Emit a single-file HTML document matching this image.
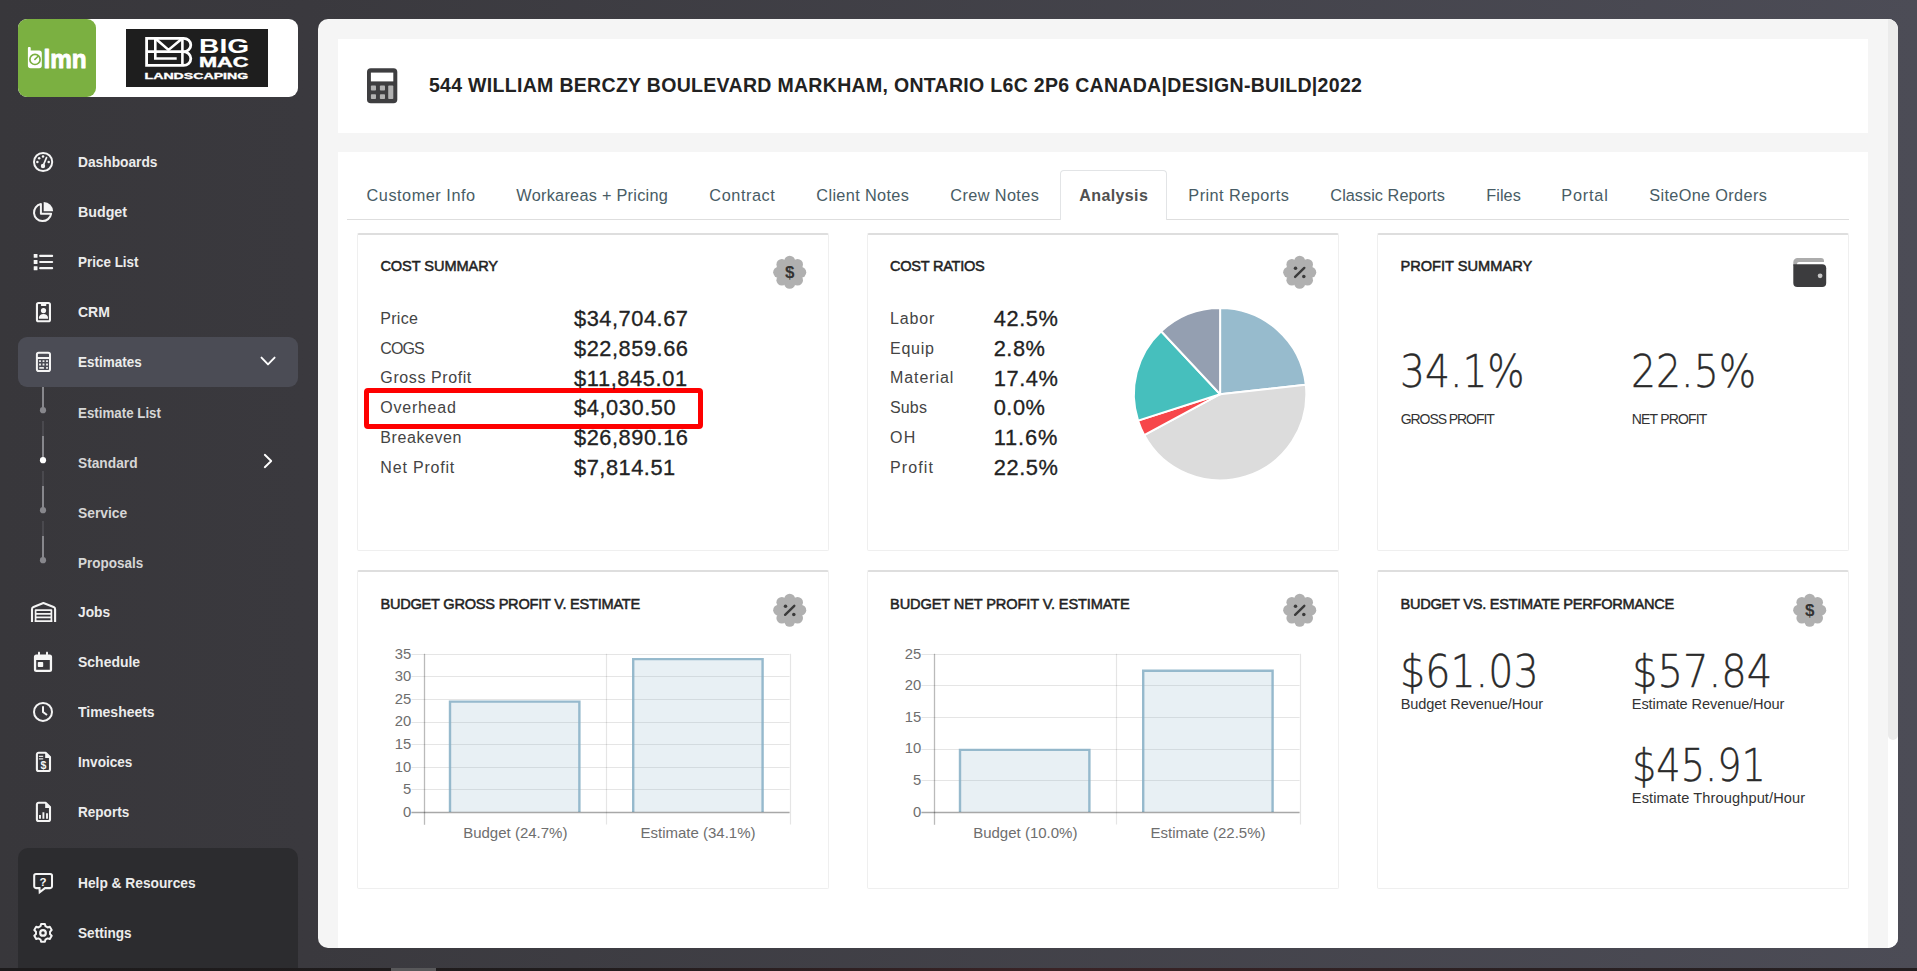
<!DOCTYPE html>
<html lang="en">
<head>
<meta charset="utf-8">
<title>Estimate Analysis</title>
<style>
*{box-sizing:border-box;margin:0;padding:0}
html,body{width:1917px;height:971px;overflow:hidden}
body{position:relative;font-family:"Liberation Sans",sans-serif;background:linear-gradient(90deg,#38373b 0%,#3a393e 16%,#4c4c56 100%)}
.abs{position:absolute}
.t{position:absolute;white-space:nowrap;transform-origin:0 50%;display:block}
#strip{position:absolute;left:0;top:968px;width:1917px;height:3px;background:linear-gradient(90deg,#1d1b1c,#201c1d 30%,#3a2326 55%,#2a2022 80%,#241f21)}
#strip i{position:absolute;left:391px;top:0;width:45px;height:3px;background:#58585a}
/* sidebar */
#logo{position:absolute;left:18px;top:19px;width:280px;height:78px;background:#fff;border-radius:9px}
#lmn{position:absolute;left:0;top:0;width:78px;height:78px;background:#7bb041;border-radius:9px}
#bm{position:absolute;left:108px;top:10px;width:142px;height:58px;background:#1e1e1e}
#active{position:absolute;left:18px;top:337px;width:280px;height:50px;background:#4b4c55;border-radius:9px}
#helpbox{position:absolute;left:18px;top:848px;width:280px;height:130px;background:#2c2c2f;border-radius:10px}
.ico{position:absolute;left:31px;width:24px;height:24px;overflow:visible}
/* main */
#panel{position:absolute;left:318px;top:19px;width:1580px;height:929px;background:#f5f5f5;border-radius:10px;overflow:hidden}
#titlecard{position:absolute;left:20px;top:20px;width:1530px;height:94px;background:#fff}
#content{position:absolute;left:20px;top:133px;width:1530px;height:800px;background:#fff}
#sbtrack{position:absolute;left:1570px;top:0;width:10px;height:929px;background:#fff}
#sbthumb{position:absolute;left:1570px;top:0;width:10px;height:721px;background:#ebebeb;border-radius:0 0 5px 5px}
.card{position:absolute;width:472px;height:318px;background:#fff;border:1px solid #efefef;border-top:2px solid #dedede;border-radius:2px}
#tabline{position:absolute;left:347px;top:219px;width:1502px;height:1px;background:#dedede}
#acttab{position:absolute;left:1060px;top:170px;width:107px;height:50px;background:#fff;border:1px solid #e2e4e6;border-bottom:none;border-radius:4px 4px 0 0}
#redbox{position:absolute;left:364.3px;top:387.6px;width:339px;height:41px;border:5px solid #fe0000;border-radius:4px}
</style>
</head>

<body>
<div id="logo">
  <div id="lmn">
    <svg class="abs" style="left:0;top:0" width="78" height="78" viewBox="0 0 78 78">
      <path d="M9.9 28.9 a.9 .9 0 0 1 .9 -.9 h1 a.9 .9 0 0 1 .9 .9 v2.5 h8.4 a2.7 2.7 0 0 1 2.7 2.7 v12.5 a2.7 2.7 0 0 1 -2.7 2.7 h-8.5 a2.7 2.7 0 0 1 -2.7 -2.7 z" fill="#fff"/>
      <circle cx="17" cy="40.4" r="5.1" fill="none" stroke="#7bb041" stroke-width="1.7"/>
      <path d="M16.4 40.8 L20.4 37" fill="none" stroke="#7bb041" stroke-width="1.6"/>
      <text x="25.4" y="49.2" font-family="Liberation Sans, sans-serif" font-weight="700" font-size="25" fill="#fff" stroke="#fff" stroke-width=".9" stroke-linejoin="round" textLength="43.2" lengthAdjust="spacingAndGlyphs">lmn</text>
    </svg>
  </div>
  <div id="bm">
    <svg class="abs" style="left:0;top:0" width="142" height="58" viewBox="0 0 142 58">
      <g fill="none" stroke="#fff" stroke-width="2.8" stroke-linejoin="miter">
        <path d="M20.6 9.3 H57.6 a7.2 6.7 0 0 1 0 13.4 a7.2 6.85 0 0 1 0 13.7 H20.6 Z"/>
        <path d="M20.6 22.7 H58"/>
        <path d="M29.3 9.3 V29.5 H50.7" stroke-width="2.6"/>
        <path d="M30 10 L42.5 20.9 L55.6 10" stroke-width="2.6"/>
        <path d="M56.4 9.3 V36.4" stroke-width="2.6"/>
      </g>
      <text x="73.1" y="23.7" font-family="Liberation Sans, sans-serif" font-weight="700" font-size="20.2" fill="#fff" textLength="50" lengthAdjust="spacingAndGlyphs">BIG</text>
      <text x="72.9" y="38" font-family="Liberation Sans, sans-serif" font-weight="700" font-size="14.2" fill="#fff" stroke="#fff" stroke-width=".4" textLength="49.6" lengthAdjust="spacingAndGlyphs">MAC</text>
      <text x="18.6" y="49.5" font-family="Liberation Sans, sans-serif" font-weight="700" font-size="8.5" fill="#fff" stroke="#fff" stroke-width=".3" textLength="103.6" lengthAdjust="spacingAndGlyphs">LANDSCAPING</text>
    </svg>
  </div>
</div>
<div id="active"></div>
<div id="helpbox"></div>
<svg class="abs" style="left:0;top:0;pointer-events:none" width="318" height="971" viewBox="0 0 318 971" fill="none" stroke="#f4f4f4" stroke-width="2" stroke-linecap="round" stroke-linejoin="round">
<circle cx="43.1" cy="162" r="9.1"/>
<g fill="#f6f6f6" stroke="none"><circle cx="37.4" cy="162.1" r="1.25"/><circle cx="39.2" cy="158.2" r="1.25"/><circle cx="43" cy="156.4" r="1.25"/><circle cx="48.7" cy="162" r="1.25"/><circle cx="43" cy="166" r="2.2"/></g>
<path d="M43 166 L46.5 157.6" stroke-width="1.7"/>
<path d="M40.9 204.07 A8.6 8.6 0 1 0 51.1 213.8 L40.9 213.8 Z" stroke-width="2"/>
<path d="M43.7 211.3 V201.9 A9.4 9.4 0 0 1 53.1 211.3 Z" fill="#f6f6f6" stroke="none"/>
<rect x="33.7" y="253.95" width="3.8" height="3.9" rx=".5" fill="#f6f6f6" stroke="none"/>
<path d="M40.2 255.9 H52.1" stroke-width="2.2"/>
<rect x="33.7" y="260.05" width="3.8" height="3.9" rx=".5" fill="#f6f6f6" stroke="none"/>
<path d="M40.2 262 H52.1" stroke-width="2.2"/>
<rect x="33.7" y="266.25" width="3.8" height="3.9" rx=".5" fill="#f6f6f6" stroke="none"/>
<path d="M40.2 268.2 H52.1" stroke-width="2.2"/>
<rect x="36.95" y="302.95" width="13" height="18.3" rx="1.6" stroke-width="2.1"/>
<g fill="#f6f6f6" stroke="none"><rect x="40.9" y="303.5" width="5.4" height="2.4" rx=".6"/><circle cx="43.5" cy="310.6" r="2.6"/><path d="M38.9 318.7 V317.6 C38.9 315.4 41 313.9 43.45 313.9 C45.9 313.9 48 315.4 48 317.6 V318.7 Z"/></g>
<rect x="36.9" y="352.8" width="13.1" height="18.2" rx="1.8" stroke-width="2"/>
<path d="M37 358 H50" stroke-width="2"/>
<g fill="#f6f6f6" stroke="none" opacity=".93">
<rect x="39.05" y="360.15" width="1.9" height="1.9" rx=".3"/>
<rect x="42.55" y="360.15" width="1.9" height="1.9" rx=".3"/>
<rect x="46.05" y="360.15" width="1.9" height="1.9" rx=".3"/>
<rect x="39.05" y="363.55" width="1.9" height="1.9" rx=".3"/>
<rect x="42.55" y="363.55" width="1.9" height="1.9" rx=".3"/>
<rect x="46.05" y="363.55" width="1.9" height="1.9" rx=".3"/>
<rect x="39.1" y="366.95" width="5" height="1.9" rx=".9"/><rect x="46.05" y="366.95" width="1.9" height="1.9" rx=".3"/></g>
<path d="M261.5 357.6 L268 364.4 L274.6 357.6" stroke-width="1.9" stroke="#fff"/>
<path d="M264.8 454.8 L271.2 461 L264.8 467.2" stroke-width="1.9" stroke="#fff"/>
<g stroke="#87878c" stroke-linecap="butt">
<path d="M43 387 V410" stroke-width="2"/>
<path d="M43 421 V436" stroke-width="1" stroke="#5d5d62"/>
<path d="M43 436 V460" stroke-width="2"/>
<path d="M43 471 V486" stroke-width="1" stroke="#5d5d62"/>
<path d="M43 486 V510" stroke-width="2"/>
<path d="M43 521 V536" stroke-width="1" stroke="#5d5d62"/>
<path d="M43 536 V560" stroke-width="2"/>
</g>
<g stroke="none"><circle cx="43" cy="410.2" r="3.1" fill="#87878c"/><circle cx="43" cy="460.2" r="3.1" fill="#fff"/><circle cx="43" cy="510.2" r="3.1" fill="#87878c"/><circle cx="43" cy="560.2" r="3.1" fill="#87878c"/></g>
<path d="M32 622 V609.2 Q32 607.6 33.5 606.9 L43.4 603.1 L53.6 606.9 Q55.1 607.6 55.1 609.2 V622" stroke-width="2.1" stroke-linecap="butt"/>
<g stroke-width="1.7" stroke-linecap="butt"><path d="M35.6 622 V610.2 H51.4 V622"/><path d="M35.6 613.8 H51.4 M35.6 617.4 H51.4 M34.8 621.1 H52.2"/></g>
<path d="M36.4 654.4 H49.6 A2.5 2.5 0 0 1 52.1 656.9 V669.5 A2.5 2.5 0 0 1 49.6 672 H36.4 A2.5 2.5 0 0 1 33.9 669.5 V656.9 A2.5 2.5 0 0 1 36.4 654.4 Z M36.2 660 V669.8 H49.8 V660 Z" fill="#f6f6f6" fill-rule="evenodd" stroke="none"/>
<g fill="#f6f6f6" stroke="none"><rect x="38" y="651.8" width="2" height="3.2" rx=".4"/><rect x="46" y="651.8" width="2" height="3.2" rx=".4"/><rect x="37.8" y="662" width="5.4" height="5" rx=".8"/></g>
<circle cx="43" cy="711.9" r="9"/>
<path d="M43 706.3 V712 L47 715" stroke-width="2" stroke-linecap="butt" stroke-linejoin="miter"/>
<path d="M38.6 752.8 H45.6 L50 757.0 V769.4 A1.7 1.7 0 0 1 48.3 771.0 H38.6 A1.7 1.7 0 0 1 36.9 769.4 V754.5 A1.7 1.7 0 0 1 38.6 752.8 Z" stroke-width="2.1"/><path d="M45.2 752.4 V757.9 H50.6 Z" fill="#f6f6f6" stroke="none"/>
<path d="M38.9 756.4 H43.2 M38.9 758.8 H43.2" stroke-width="1.3" stroke-linecap="butt" opacity=".9"/>
<text x="43.5" y="768.6" text-anchor="middle" font-family="Liberation Sans, sans-serif" font-weight="700" font-size="10.5" fill="#f6f6f6" stroke="none" style="opacity:.999">$</text>
<path d="M38.6 802.8 H45.6 L50 807.0 V819.4 A1.7 1.7 0 0 1 48.3 821.0 H38.6 A1.7 1.7 0 0 1 36.9 819.4 V804.5 A1.7 1.7 0 0 1 38.6 802.8 Z" stroke-width="2.1"/><path d="M45.2 802.4 V807.9 H50.6 Z" fill="#f6f6f6" stroke="none"/>
<path d="M40 818.8 V814.9 M43.4 818.8 V812.3 M47 818.8 V813.2" stroke-width="1.9" stroke-linecap="butt"/>
<path d="M36 874 H50.2 A1.8 1.8 0 0 1 52 875.8 V886.3 A1.8 1.8 0 0 1 50.2 888.1 H45 L39.7 892.3 L39.5 888.1 H36 A1.8 1.8 0 0 1 34.2 886.3 V875.8 A1.8 1.8 0 0 1 36 874 Z" stroke-width="2.05" stroke-linejoin="miter"/>
<text x="43.1" y="885.6" text-anchor="middle" font-family="Liberation Sans, sans-serif" font-weight="700" font-size="11.5" fill="#f6f6f6" stroke="none" style="opacity:.999">?</text>
<path d="M45.45 926.18 L44.90 923.95 L41.10 923.95 L40.55 926.18 L38.40 927.42 L36.20 926.78 L34.30 930.07 L35.96 931.66 L35.96 934.14 L34.30 935.73 L36.20 939.02 L38.40 938.38 L40.55 939.62 L41.10 941.85 L44.90 941.85 L45.45 939.62 L47.60 938.38 L49.80 939.02 L51.70 935.73 L50.04 934.14 L50.04 931.66 L51.70 930.07 L49.80 926.78 L47.60 927.42 Z" stroke-width="2"/>
<circle cx="43" cy="932.9" r="2.8" stroke-width="2.2"/>
</svg>

<div id="panel">
  <div id="titlecard"></div>
  <div id="content"></div>
  <div id="sbtrack"></div><div id="sbthumb"></div>
</div>
<div id="strip"><i></i></div>
<div id="tabline"></div><div id="acttab"></div>
<div class="card" style="left:357px;top:233px"></div>
<div class="card" style="left:867px;top:233px"></div>
<div class="card" style="left:1377px;top:233px"></div>
<div class="card" style="left:357px;top:570px;height:319px"></div>
<div class="card" style="left:867px;top:570px;height:319px"></div>
<div class="card" style="left:1377px;top:570px;height:319px"></div>
<div id="redbox"></div>
<svg class="abs" style="left:318px;top:19px;pointer-events:none" width="1580" height="929" viewBox="318 19 1580 929">
<g>
<rect x="367" y="68.3" width="30.3" height="35" rx="3.8" fill="#3e3e40"/>
<rect x="370.9" y="72.6" width="22.4" height="8.8" fill="#fff"/>
<g fill="#b1b1b1"><rect x="370.9" y="85.6" width="5.1" height="4.9" rx=".8"/><rect x="379.9" y="85.6" width="5.1" height="4.9" rx=".8"/>
<rect x="370.9" y="94.2" width="5.1" height="4.9" rx=".8"/><rect x="379.9" y="94.2" width="5.1" height="4.9" rx=".8"/>
<rect x="388.2" y="85.6" width="5.1" height="13.5" rx=".8"/></g></g>
<g><g fill="#b0b0b0"><circle cx="789.7" cy="272.3" r="12.2"/><circle cx="789.70" cy="261.20" r="5.45"/><circle cx="797.55" cy="264.45" r="5.45"/><circle cx="800.80" cy="272.30" r="5.45"/><circle cx="797.55" cy="280.15" r="5.45"/><circle cx="789.70" cy="283.40" r="5.45"/><circle cx="781.85" cy="280.15" r="5.45"/><circle cx="778.60" cy="272.30" r="5.45"/><circle cx="781.85" cy="264.45" r="5.45"/></g><text x="789.7" y="278.40000000000003" text-anchor="middle" font-family="Liberation Sans, sans-serif" font-weight="700" font-size="17" fill="#333" style="opacity:.999">$</text></g>
<g><g fill="#b0b0b0"><circle cx="1299.7" cy="272.3" r="12.2"/><circle cx="1299.70" cy="261.20" r="5.45"/><circle cx="1307.55" cy="264.45" r="5.45"/><circle cx="1310.80" cy="272.30" r="5.45"/><circle cx="1307.55" cy="280.15" r="5.45"/><circle cx="1299.70" cy="283.40" r="5.45"/><circle cx="1291.85" cy="280.15" r="5.45"/><circle cx="1288.60" cy="272.30" r="5.45"/><circle cx="1291.85" cy="264.45" r="5.45"/></g><g fill="#3a3a3a" stroke="none"><circle cx="1295.5" cy="268.3" r="1.75"/><circle cx="1303.8" cy="276.5" r="1.75"/></g><path d="M1295.1000000000001 276.90000000000003 L1304.3 267.90000000000003" stroke="#3a3a3a" stroke-width="2.4" stroke-linecap="round"/></g>
<g><g fill="#b0b0b0"><circle cx="789.7" cy="610.2" r="12.2"/><circle cx="789.70" cy="599.10" r="5.45"/><circle cx="797.55" cy="602.35" r="5.45"/><circle cx="800.80" cy="610.20" r="5.45"/><circle cx="797.55" cy="618.05" r="5.45"/><circle cx="789.70" cy="621.30" r="5.45"/><circle cx="781.85" cy="618.05" r="5.45"/><circle cx="778.60" cy="610.20" r="5.45"/><circle cx="781.85" cy="602.35" r="5.45"/></g><g fill="#3a3a3a" stroke="none"><circle cx="785.5" cy="606.2" r="1.75"/><circle cx="793.8000000000001" cy="614.4000000000001" r="1.75"/></g><path d="M785.1 614.8000000000001 L794.3000000000001 605.8000000000001" stroke="#3a3a3a" stroke-width="2.4" stroke-linecap="round"/></g>
<g><g fill="#b0b0b0"><circle cx="1299.7" cy="610.2" r="12.2"/><circle cx="1299.70" cy="599.10" r="5.45"/><circle cx="1307.55" cy="602.35" r="5.45"/><circle cx="1310.80" cy="610.20" r="5.45"/><circle cx="1307.55" cy="618.05" r="5.45"/><circle cx="1299.70" cy="621.30" r="5.45"/><circle cx="1291.85" cy="618.05" r="5.45"/><circle cx="1288.60" cy="610.20" r="5.45"/><circle cx="1291.85" cy="602.35" r="5.45"/></g><g fill="#3a3a3a" stroke="none"><circle cx="1295.5" cy="606.2" r="1.75"/><circle cx="1303.8" cy="614.4000000000001" r="1.75"/></g><path d="M1295.1000000000001 614.8000000000001 L1304.3 605.8000000000001" stroke="#3a3a3a" stroke-width="2.4" stroke-linecap="round"/></g>
<g><g fill="#b0b0b0"><circle cx="1809.7" cy="610.2" r="12.2"/><circle cx="1809.70" cy="599.10" r="5.45"/><circle cx="1817.55" cy="602.35" r="5.45"/><circle cx="1820.80" cy="610.20" r="5.45"/><circle cx="1817.55" cy="618.05" r="5.45"/><circle cx="1809.70" cy="621.30" r="5.45"/><circle cx="1801.85" cy="618.05" r="5.45"/><circle cx="1798.60" cy="610.20" r="5.45"/><circle cx="1801.85" cy="602.35" r="5.45"/></g><text x="1809.7" y="616.3000000000001" text-anchor="middle" font-family="Liberation Sans, sans-serif" font-weight="700" font-size="17" fill="#333" style="opacity:.999">$</text></g>
<g>
<path d="M1793.3 266 V262.2 a4.2 4.2 0 0 1 4.2 -4.2 H1821 a3 3 0 0 1 3 3 V262 H1799 a2 2 0 0 0 -2 2 V266 Z" fill="#acacac"/>
<path d="M1793.3 264.3 H1822.2 a4 4 0 0 1 4 4 V282.9 a4 4 0 0 1 -4 4 H1797.3 a4 4 0 0 1 -4 -4 Z" fill="#3c3c3e"/>
<circle cx="1820.1" cy="275.8" r="2.4" fill="#c6c6c6"/></g>
<g stroke="#fff" stroke-width="2" stroke-linejoin="round"><path d="M1220.1 394.2 L1220.10 308.00 A86.2 86.2 0 0 1 1305.78 384.71 Z" fill="#97BBCD"/><path d="M1220.1 394.2 L1305.78 384.71 A86.2 86.2 0 0 1 1144.18 435.02 Z" fill="#DCDCDC"/><path d="M1220.1 394.2 L1144.18 435.02 A86.2 86.2 0 0 1 1138.05 420.62 Z" fill="#F7464A"/><path d="M1220.1 394.2 L1138.05 420.62 A86.2 86.2 0 0 1 1161.16 331.30 Z" fill="#46BFBD"/><path d="M1220.1 394.2 L1161.16 331.30 A86.2 86.2 0 0 1 1220.10 308.00 Z" fill="#949FB1"/></g>
<g><text x="411.3" y="816.7" text-anchor="end" font-family="Liberation Sans, sans-serif" font-size="14.8" fill="#6e6e6e">0</text><path d="M411.4 789.5 H789.6" stroke="#000" stroke-opacity=".10" stroke-width="1.2"/><text x="411.3" y="794.1" text-anchor="end" font-family="Liberation Sans, sans-serif" font-size="14.8" fill="#6e6e6e">5</text><path d="M411.4 767.5 H789.6" stroke="#000" stroke-opacity=".10" stroke-width="1.2"/><text x="411.3" y="771.5" text-anchor="end" font-family="Liberation Sans, sans-serif" font-size="14.8" fill="#6e6e6e">10</text><path d="M411.4 744.5 H789.6" stroke="#000" stroke-opacity=".10" stroke-width="1.2"/><text x="411.3" y="748.9" text-anchor="end" font-family="Liberation Sans, sans-serif" font-size="14.8" fill="#6e6e6e">15</text><path d="M411.4 722.5 H789.6" stroke="#000" stroke-opacity=".10" stroke-width="1.2"/><text x="411.3" y="726.3" text-anchor="end" font-family="Liberation Sans, sans-serif" font-size="14.8" fill="#6e6e6e">20</text><path d="M411.4 699.5 H789.6" stroke="#000" stroke-opacity=".10" stroke-width="1.2"/><text x="411.3" y="703.7" text-anchor="end" font-family="Liberation Sans, sans-serif" font-size="14.8" fill="#6e6e6e">25</text><path d="M411.4 676.5 H789.6" stroke="#000" stroke-opacity=".10" stroke-width="1.2"/><text x="411.3" y="681.1" text-anchor="end" font-family="Liberation Sans, sans-serif" font-size="14.8" fill="#6e6e6e">30</text><path d="M411.4 654.5 H789.6" stroke="#000" stroke-opacity=".10" stroke-width="1.2"/><text x="411.3" y="658.5" text-anchor="end" font-family="Liberation Sans, sans-serif" font-size="14.8" fill="#6e6e6e">35</text><path d="M606.5 653.8 V824.5" stroke="#000" stroke-opacity=".10" stroke-width="1.2"/><path d="M790.5 653.8 V824.5" stroke="#000" stroke-opacity=".10" stroke-width="1.2"/><path d="M424.5 653.8 V824.8" stroke="#000" stroke-opacity=".27" stroke-width="1.3"/><path d="M450.0 812.0 V701.6 H579.4 V812.0" fill="rgba(151,187,205,.22)" stroke="rgba(137,177,198,.88)" stroke-width="2.4"/><path d="M633.2 812.0 V659.1 H762.6 V812.0" fill="rgba(151,187,205,.22)" stroke="rgba(137,177,198,.88)" stroke-width="2.4"/><path d="M411.4 812.5 H789.6" stroke="#000" stroke-opacity=".34" stroke-width="1.3"/><text x="515.3" y="837.6" text-anchor="middle" font-family="Liberation Sans, sans-serif" font-size="15" fill="#6e6e6e">Budget (24.7%)</text><text x="698.0" y="837.6" text-anchor="middle" font-family="Liberation Sans, sans-serif" font-size="15" fill="#6e6e6e">Estimate (34.1%)</text></g>
<g><text x="921.3" y="816.7" text-anchor="end" font-family="Liberation Sans, sans-serif" font-size="14.8" fill="#6e6e6e">0</text><path d="M921.4 780.5 H1299.6" stroke="#000" stroke-opacity=".10" stroke-width="1.2"/><text x="921.3" y="785.1" text-anchor="end" font-family="Liberation Sans, sans-serif" font-size="14.8" fill="#6e6e6e">5</text><path d="M921.4 749.5 H1299.6" stroke="#000" stroke-opacity=".10" stroke-width="1.2"/><text x="921.3" y="753.4" text-anchor="end" font-family="Liberation Sans, sans-serif" font-size="14.8" fill="#6e6e6e">10</text><path d="M921.4 717.5 H1299.6" stroke="#000" stroke-opacity=".10" stroke-width="1.2"/><text x="921.3" y="721.8" text-anchor="end" font-family="Liberation Sans, sans-serif" font-size="14.8" fill="#6e6e6e">15</text><path d="M921.4 685.5 H1299.6" stroke="#000" stroke-opacity=".10" stroke-width="1.2"/><text x="921.3" y="690.1" text-anchor="end" font-family="Liberation Sans, sans-serif" font-size="14.8" fill="#6e6e6e">20</text><path d="M921.4 654.5 H1299.6" stroke="#000" stroke-opacity=".10" stroke-width="1.2"/><text x="921.3" y="658.5" text-anchor="end" font-family="Liberation Sans, sans-serif" font-size="14.8" fill="#6e6e6e">25</text><path d="M1116.5 653.8 V824.5" stroke="#000" stroke-opacity=".10" stroke-width="1.2"/><path d="M1300.5 653.8 V824.5" stroke="#000" stroke-opacity=".10" stroke-width="1.2"/><path d="M934.5 653.8 V824.8" stroke="#000" stroke-opacity=".27" stroke-width="1.3"/><path d="M960.0 812.0 V749.9 H1089.4 V812.0" fill="rgba(151,187,205,.22)" stroke="rgba(137,177,198,.88)" stroke-width="2.4"/><path d="M1143.2 812.0 V670.8 H1272.6 V812.0" fill="rgba(151,187,205,.22)" stroke="rgba(137,177,198,.88)" stroke-width="2.4"/><path d="M921.4 812.5 H1299.6" stroke="#000" stroke-opacity=".34" stroke-width="1.3"/><text x="1025.3" y="837.6" text-anchor="middle" font-family="Liberation Sans, sans-serif" font-size="15" fill="#6e6e6e">Budget (10.0%)</text><text x="1208.0" y="837.6" text-anchor="middle" font-family="Liberation Sans, sans-serif" font-size="15" fill="#6e6e6e">Estimate (22.5%)</text></g>
</svg>

<div id="texts">
<span class="t" style='left:428.92px;top:76.00px;font:700 19.5px/1 "Liberation Sans", sans-serif;color:#222;letter-spacing:0.311px;'>544 WILLIAM BERCZY BOULEVARD MARKHAM, ONTARIO L6C 2P6 CANADA|DESIGN-BUILD|2022</span>
<span class="t" style='left:366.55px;top:187.00px;font:400 16.3px/1 "Liberation Sans", sans-serif;color:#485c65;letter-spacing:0.525px;'>Customer Info</span>
<span class="t" style='left:516.35px;top:187.00px;font:400 16.3px/1 "Liberation Sans", sans-serif;color:#485c65;letter-spacing:0.262px;'>Workareas + Pricing</span>
<span class="t" style='left:709.35px;top:187.00px;font:400 16.3px/1 "Liberation Sans", sans-serif;color:#485c65;letter-spacing:0.560px;'>Contract</span>
<span class="t" style='left:816.35px;top:187.00px;font:400 16.3px/1 "Liberation Sans", sans-serif;color:#485c65;letter-spacing:0.344px;'>Client Notes</span>
<span class="t" style='left:950.35px;top:187.00px;font:400 16.3px/1 "Liberation Sans", sans-serif;color:#485c65;letter-spacing:0.378px;'>Crew Notes</span>
<span class="t" style='left:1079.36px;top:188.00px;font:700 16px/1 "Liberation Sans", sans-serif;color:#505050;letter-spacing:0.375px;'>Analysis</span>
<span class="t" style='left:1188.35px;top:187.00px;font:400 16.3px/1 "Liberation Sans", sans-serif;color:#485c65;letter-spacing:0.454px;'>Print Reports</span>
<span class="t" style='left:1330.35px;top:187.00px;font:400 16.3px/1 "Liberation Sans", sans-serif;color:#485c65;letter-spacing:0.032px;'>Classic Reports</span>
<span class="t" style='left:1486.35px;top:187.00px;font:400 16.3px/1 "Liberation Sans", sans-serif;color:#485c65;letter-spacing:0.019px;'>Files</span>
<span class="t" style='left:1561.35px;top:187.00px;font:400 16.3px/1 "Liberation Sans", sans-serif;color:#485c65;letter-spacing:0.784px;'>Portal</span>
<span class="t" style='left:1649.35px;top:187.00px;font:400 16.3px/1 "Liberation Sans", sans-serif;color:#485c65;letter-spacing:0.334px;'>SiteOne Orders</span>
<span class="t" style='left:380.42px;top:259.00px;font:400 14.6px/1 "Liberation Sans", sans-serif;color:#222;letter-spacing:-0.087px;-webkit-text-stroke:.5px #222;'>COST SUMMARY</span>
<span class="t" style='left:890.02px;top:259.00px;font:400 14.6px/1 "Liberation Sans", sans-serif;color:#222;letter-spacing:-0.276px;-webkit-text-stroke:.5px #222;'>COST RATIOS</span>
<span class="t" style='left:1400.42px;top:259.00px;font:400 14.6px/1 "Liberation Sans", sans-serif;color:#222;letter-spacing:0.013px;-webkit-text-stroke:.5px #222;'>PROFIT SUMMARY</span>
<span class="t" style='left:380.42px;top:597.00px;font:400 14.6px/1 "Liberation Sans", sans-serif;color:#222;letter-spacing:-0.242px;-webkit-text-stroke:.5px #222;'>BUDGET GROSS PROFIT V. ESTIMATE</span>
<span class="t" style='left:890.02px;top:597.00px;font:400 14.6px/1 "Liberation Sans", sans-serif;color:#222;letter-spacing:-0.124px;-webkit-text-stroke:.5px #222;'>BUDGET NET PROFIT V. ESTIMATE</span>
<span class="t" style='left:1400.42px;top:597.00px;font:400 14.6px/1 "Liberation Sans", sans-serif;color:#222;letter-spacing:-0.261px;-webkit-text-stroke:.5px #222;'>BUDGET VS. ESTIMATE PERFORMANCE</span>
<span class="t" style='left:380.36px;top:311.00px;font:400 16px/1 "Liberation Sans", sans-serif;color:#444;letter-spacing:0.247px;'>Price</span>
<span class="t" style='left:574.03px;top:308.00px;font:400 21.8px/1 "Liberation Sans", sans-serif;color:#222;letter-spacing:0.541px;-webkit-text-stroke:.3px #222;'>$34,704.67</span>
<span class="t" style='left:380.36px;top:341.00px;font:400 16px/1 "Liberation Sans", sans-serif;color:#444;letter-spacing:-0.895px;'>COGS</span>
<span class="t" style='left:574.03px;top:338.00px;font:400 21.8px/1 "Liberation Sans", sans-serif;color:#222;letter-spacing:0.541px;-webkit-text-stroke:.3px #222;'>$22,859.66</span>
<span class="t" style='left:380.36px;top:370.00px;font:400 16px/1 "Liberation Sans", sans-serif;color:#444;letter-spacing:0.588px;'>Gross Profit</span>
<span class="t" style='left:574.03px;top:368.00px;font:400 21.8px/1 "Liberation Sans", sans-serif;color:#222;letter-spacing:0.631px;-webkit-text-stroke:.3px #222;'>$11,845.01</span>
<span class="t" style='left:380.36px;top:400.00px;font:400 16px/1 "Liberation Sans", sans-serif;color:#444;letter-spacing:0.739px;'>Overhead</span>
<span class="t" style='left:574.03px;top:397.00px;font:400 21.8px/1 "Liberation Sans", sans-serif;color:#222;letter-spacing:0.587px;-webkit-text-stroke:.3px #222;'>$4,030.50</span>
<span class="t" style='left:380.36px;top:430.00px;font:400 16px/1 "Liberation Sans", sans-serif;color:#444;letter-spacing:0.555px;'>Breakeven</span>
<span class="t" style='left:574.03px;top:427.00px;font:400 21.8px/1 "Liberation Sans", sans-serif;color:#222;letter-spacing:0.541px;-webkit-text-stroke:.3px #222;'>$26,890.16</span>
<span class="t" style='left:380.36px;top:460.00px;font:400 16px/1 "Liberation Sans", sans-serif;color:#444;letter-spacing:0.806px;'>Net Profit</span>
<span class="t" style='left:574.03px;top:457.00px;font:400 21.8px/1 "Liberation Sans", sans-serif;color:#222;letter-spacing:0.524px;-webkit-text-stroke:.3px #222;'>$7,814.51</span>
<span class="t" style='left:889.96px;top:311.00px;font:400 16px/1 "Liberation Sans", sans-serif;color:#444;letter-spacing:0.880px;'>Labor</span>
<span class="t" style='left:993.73px;top:308.00px;font:400 21.8px/1 "Liberation Sans", sans-serif;color:#222;letter-spacing:0.587px;-webkit-text-stroke:.3px #222;'>42.5%</span>
<span class="t" style='left:889.96px;top:341.00px;font:400 16px/1 "Liberation Sans", sans-serif;color:#444;letter-spacing:0.755px;'>Equip</span>
<span class="t" style='left:993.73px;top:338.00px;font:400 21.8px/1 "Liberation Sans", sans-serif;color:#222;letter-spacing:0.492px;-webkit-text-stroke:.3px #222;'>2.8%</span>
<span class="t" style='left:889.96px;top:370.00px;font:400 16px/1 "Liberation Sans", sans-serif;color:#444;letter-spacing:0.933px;'>Material</span>
<span class="t" style='left:993.73px;top:368.00px;font:400 21.8px/1 "Liberation Sans", sans-serif;color:#222;letter-spacing:0.587px;-webkit-text-stroke:.3px #222;'>17.4%</span>
<span class="t" style='left:889.96px;top:400.00px;font:400 16px/1 "Liberation Sans", sans-serif;color:#444;letter-spacing:0.157px;'>Subs</span>
<span class="t" style='left:993.73px;top:397.00px;font:400 21.8px/1 "Liberation Sans", sans-serif;color:#222;letter-spacing:0.492px;-webkit-text-stroke:.3px #222;'>0.0%</span>
<span class="t" style='left:889.96px;top:430.00px;font:400 16px/1 "Liberation Sans", sans-serif;color:#444;letter-spacing:1.440px;'>OH</span>
<span class="t" style='left:993.73px;top:427.00px;font:400 21.8px/1 "Liberation Sans", sans-serif;color:#222;letter-spacing:0.869px;-webkit-text-stroke:.3px #222;'>11.6%</span>
<span class="t" style='left:889.96px;top:460.00px;font:400 16px/1 "Liberation Sans", sans-serif;color:#444;letter-spacing:1.119px;'>Profit</span>
<span class="t" style='left:993.73px;top:457.00px;font:400 21.8px/1 "Liberation Sans", sans-serif;color:#222;letter-spacing:0.587px;-webkit-text-stroke:.3px #222;'>22.5%</span>
<span class="t" style='left:1400.43px;top:350.00px;font:300 44.6px/1 "DejaVu Sans Light", "DejaVu Sans", "Liberation Sans", sans-serif;color:#2a2a2a;transform:scaleX(0.8796);-webkit-text-stroke:.35px #2a2a2a;'>34.1%</span>
<span class="t" style='left:1631.42px;top:350.00px;font:300 44.6px/1 "DejaVu Sans Light", "DejaVu Sans", "Liberation Sans", sans-serif;color:#2a2a2a;transform:scaleX(0.8831);-webkit-text-stroke:.35px #2a2a2a;'>22.5%</span>
<span class="t" style='left:1400.74px;top:412.00px;font:400 14px/1 "Liberation Sans", sans-serif;color:#333;letter-spacing:-1.067px;'>GROSS PROFIT</span>
<span class="t" style='left:1631.84px;top:412.00px;font:400 14px/1 "Liberation Sans", sans-serif;color:#333;letter-spacing:-0.834px;'>NET PROFIT</span>
<span class="t" style='left:1400.42px;top:650.00px;font:300 44.6px/1 "DejaVu Sans Light", "DejaVu Sans", "Liberation Sans", sans-serif;color:#2a2a2a;transform:scaleX(0.8883);-webkit-text-stroke:.35px #2a2a2a;'>$61.03</span>
<span class="t" style='left:1631.99px;top:650.00px;font:300 44.6px/1 "DejaVu Sans Light", "DejaVu Sans", "Liberation Sans", sans-serif;color:#2a2a2a;transform:scaleX(0.8998);-webkit-text-stroke:.35px #2a2a2a;'>$57.84</span>
<span class="t" style='left:1632.07px;top:744.00px;font:300 44.6px/1 "DejaVu Sans Light", "DejaVu Sans", "Liberation Sans", sans-serif;color:#2a2a2a;transform:scaleX(0.8582);-webkit-text-stroke:.35px #2a2a2a;'>$45.91</span>
<span class="t" style='left:1400.72px;top:697.00px;font:400 14.6px/1 "Liberation Sans", sans-serif;color:#333;letter-spacing:-0.117px;'>Budget Revenue/Hour</span>
<span class="t" style='left:1631.82px;top:697.00px;font:400 14.6px/1 "Liberation Sans", sans-serif;color:#333;letter-spacing:-0.121px;'>Estimate Revenue/Hour</span>
<span class="t" style='left:1631.82px;top:791.00px;font:400 14.6px/1 "Liberation Sans", sans-serif;color:#333;letter-spacing:0.105px;'>Estimate Throughput/Hour</span>
<span class="t" style='left:77.85px;top:154.00px;font:700 15.2px/1 "Liberation Sans", sans-serif;color:#ececec;transform:scaleX(0.9060);'>Dashboards</span>
<span class="t" style='left:77.83px;top:204.00px;font:700 15.2px/1 "Liberation Sans", sans-serif;color:#ececec;transform:scaleX(0.9373);'>Budget</span>
<span class="t" style='left:77.86px;top:254.00px;font:700 15.2px/1 "Liberation Sans", sans-serif;color:#ececec;transform:scaleX(0.8853);'>Price List</span>
<span class="t" style='left:77.84px;top:304.00px;font:700 15.2px/1 "Liberation Sans", sans-serif;color:#ececec;transform:scaleX(0.9201);'>CRM</span>
<span class="t" style='left:77.86px;top:354.00px;font:700 15.2px/1 "Liberation Sans", sans-serif;color:#ececec;transform:scaleX(0.8867);'>Estimates</span>
<span class="t" style='left:77.87px;top:405.00px;font:700 15.2px/1 "Liberation Sans", sans-serif;color:#d6d6d6;transform:scaleX(0.8773);'>Estimate List</span>
<span class="t" style='left:77.85px;top:455.00px;font:700 15.2px/1 "Liberation Sans", sans-serif;color:#d6d6d6;transform:scaleX(0.9043);'>Standard</span>
<span class="t" style='left:77.85px;top:505.00px;font:700 15.2px/1 "Liberation Sans", sans-serif;color:#d6d6d6;transform:scaleX(0.9109);'>Service</span>
<span class="t" style='left:77.86px;top:555.00px;font:700 15.2px/1 "Liberation Sans", sans-serif;color:#d6d6d6;transform:scaleX(0.8883);'>Proposals</span>
<span class="t" style='left:77.85px;top:604.00px;font:700 15.2px/1 "Liberation Sans", sans-serif;color:#ececec;transform:scaleX(0.9063);'>Jobs</span>
<span class="t" style='left:77.84px;top:654.00px;font:700 15.2px/1 "Liberation Sans", sans-serif;color:#ececec;transform:scaleX(0.9200);'>Schedule</span>
<span class="t" style='left:77.84px;top:704.00px;font:700 15.2px/1 "Liberation Sans", sans-serif;color:#ececec;transform:scaleX(0.9200);'>Timesheets</span>
<span class="t" style='left:77.86px;top:754.00px;font:700 15.2px/1 "Liberation Sans", sans-serif;color:#ececec;transform:scaleX(0.8955);'>Invoices</span>
<span class="t" style='left:77.86px;top:804.00px;font:700 15.2px/1 "Liberation Sans", sans-serif;color:#ececec;transform:scaleX(0.8927);'>Reports</span>
<span class="t" style='left:77.85px;top:875.00px;font:700 15.2px/1 "Liberation Sans", sans-serif;color:#ececec;transform:scaleX(0.9050);'>Help &amp; Resources</span>
<span class="t" style='left:77.86px;top:925.00px;font:700 15.2px/1 "Liberation Sans", sans-serif;color:#ececec;transform:scaleX(0.8950);'>Settings</span>
</div>
</body>
</html>
